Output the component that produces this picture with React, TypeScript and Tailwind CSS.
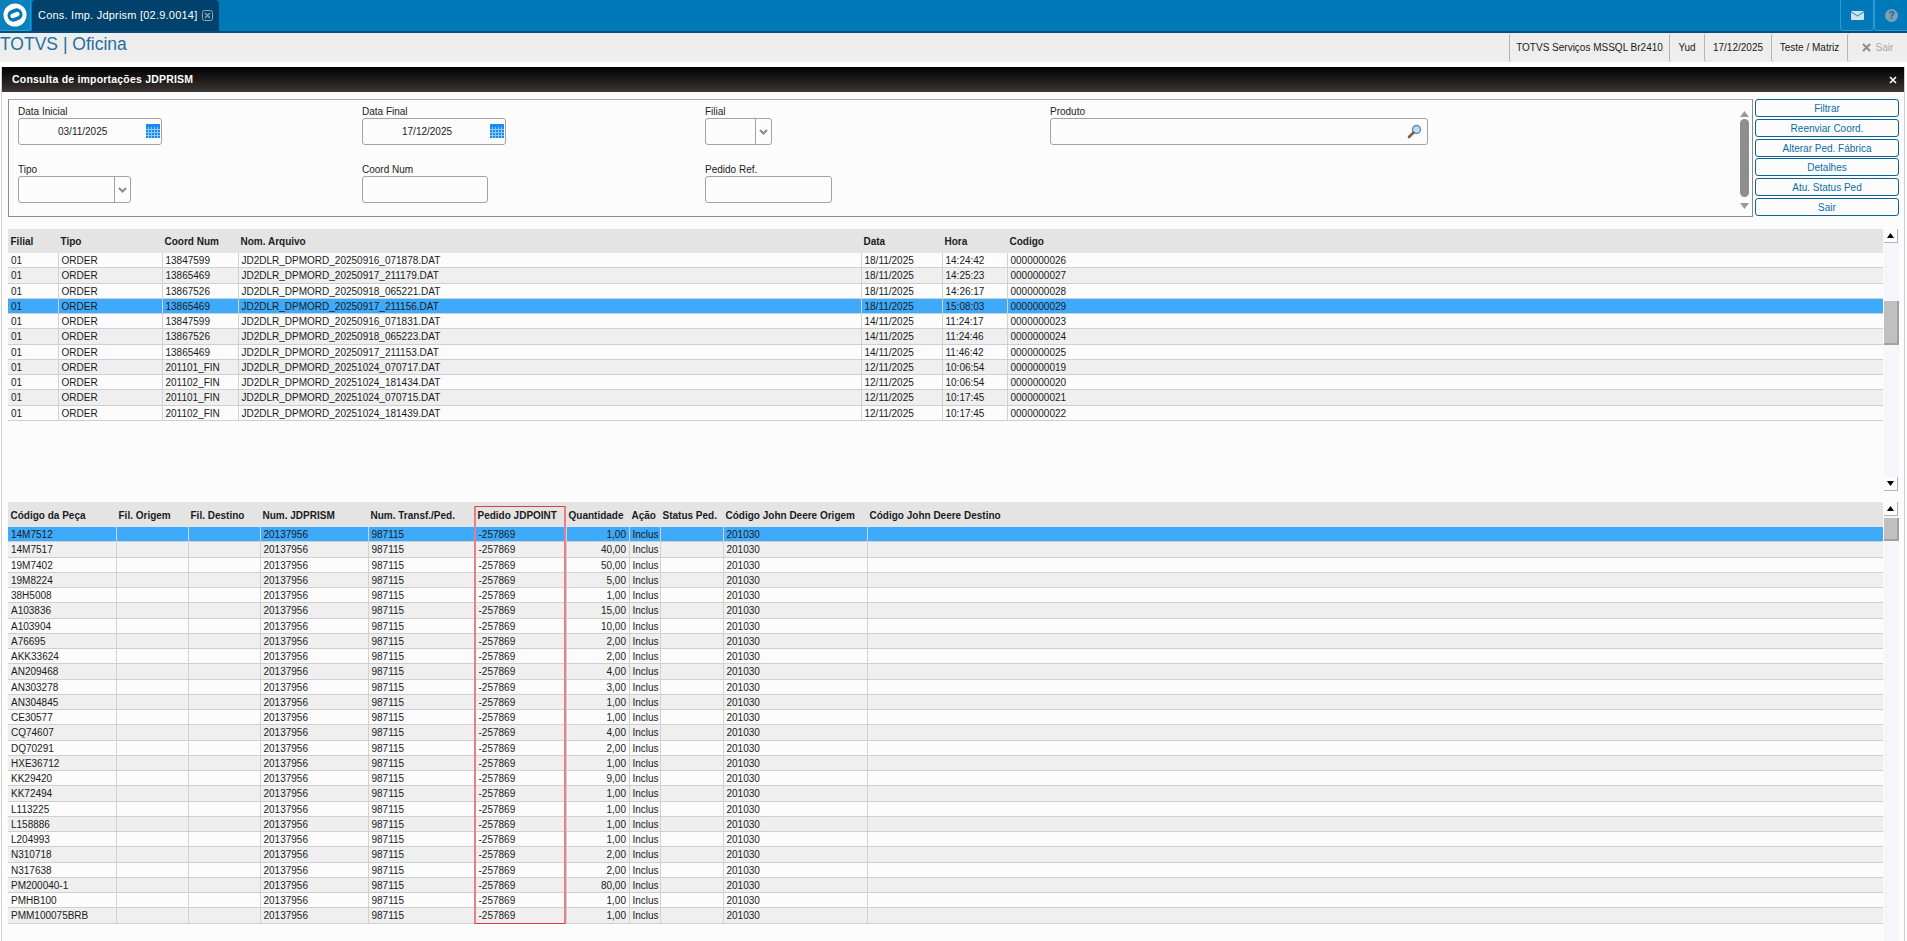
import React from "react";

const FONT = "font-['Liberation_Sans',Arial,sans-serif]";

const t1Cols = [50, 104, 76, 623, 81, 65, 876];
const t1Head = ["Filial", "Tipo", "Coord Num", "Nom. Arquivo", "Data", "Hora", "Codigo"];
const t1Rows: string[][] = [
  ["01", "ORDER", "13847599", "JD2DLR_DPMORD_20250916_071878.DAT", "18/11/2025", "14:24:42", "0000000026"],
  ["01", "ORDER", "13865469", "JD2DLR_DPMORD_20250917_211179.DAT", "18/11/2025", "14:25:23", "0000000027"],
  ["01", "ORDER", "13867526", "JD2DLR_DPMORD_20250918_065221.DAT", "18/11/2025", "14:26:17", "0000000028"],
  ["01", "ORDER", "13865469", "JD2DLR_DPMORD_20250917_211156.DAT", "18/11/2025", "15:08:03", "0000000029"],
  ["01", "ORDER", "13847599", "JD2DLR_DPMORD_20250916_071831.DAT", "14/11/2025", "11:24:17", "0000000023"],
  ["01", "ORDER", "13867526", "JD2DLR_DPMORD_20250918_065223.DAT", "14/11/2025", "11:24:46", "0000000024"],
  ["01", "ORDER", "13865469", "JD2DLR_DPMORD_20250917_211153.DAT", "14/11/2025", "11:46:42", "0000000025"],
  ["01", "ORDER", "201101_FIN", "JD2DLR_DPMORD_20251024_070717.DAT", "12/11/2025", "10:06:54", "0000000019"],
  ["01", "ORDER", "201102_FIN", "JD2DLR_DPMORD_20251024_181434.DAT", "12/11/2025", "10:06:54", "0000000020"],
  ["01", "ORDER", "201101_FIN", "JD2DLR_DPMORD_20251024_070715.DAT", "12/11/2025", "10:17:45", "0000000021"],
  ["01", "ORDER", "201102_FIN", "JD2DLR_DPMORD_20251024_181439.DAT", "12/11/2025", "10:17:45", "0000000022"],
];

const t2Cols = [108, 72, 72, 108, 107, 91, 63, 31, 63, 144, 1017];
const t2Head = ["Código da Peça", "Fil. Origem", "Fil. Destino", "Num. JDPRISM", "Num. Transf./Ped.", "Pedido JDPOINT", "Quantidade", "Ação", "Status Ped.", "Código John Deere Origem", "Código John Deere Destino"];
const parts: [string, string][] = [
  ["14M7512", "1,00"], ["14M7517", "40,00"], ["19M7402", "50,00"], ["19M8224", "5,00"], ["38H5008", "1,00"],
  ["A103836", "15,00"], ["A103904", "10,00"], ["A76695", "2,00"], ["AKK33624", "2,00"], ["AN209468", "4,00"],
  ["AN303278", "3,00"], ["AN304845", "1,00"], ["CE30577", "1,00"], ["CQ74607", "4,00"], ["DQ70291", "2,00"],
  ["HXE36712", "1,00"], ["KK29420", "9,00"], ["KK72494", "1,00"], ["L113225", "1,00"], ["L158886", "1,00"],
  ["L204993", "1,00"], ["N310718", "2,00"], ["N317638", "2,00"], ["PM200040-1", "80,00"], ["PMHB100", "1,00"],
  ["PMM100075BRB", "1,00"],
];

function Row({ cols, cells, index, selected, rightAlign = [] }: { cols: number[]; cells: string[]; index: number; selected: boolean; rightAlign?: number[] }) {
  const bg = selected ? "bg-[#3eaafb]" : index % 2 === 1 ? "bg-[#efefef]" : "bg-[#fcfcfc]";
  return (
    <div className={`flex h-[15.25px] border-b border-[#cfcfcf] ${bg}`}>
      {cells.map((c, i) => (
        <div
          key={i}
          style={{ width: cols[i] }}
          className={`shrink-0 overflow-hidden whitespace-nowrap pr-[3px] leading-[15px] ${i > 0 ? "border-l border-[#d2d2d2] pl-[2.5px]" : "pl-[3px]"} ${rightAlign.includes(i) ? "text-right" : ""}`}
        >
          {c}
        </div>
      ))}
    </div>
  );
}

function Head({ cols, labels, height }: { cols: number[]; labels: string[]; height: string }) {
  return (
    <div className={`flex items-center bg-[#e4e4e4] pt-[1px] font-bold text-[#1c1c1c] ${height}`}>
      {labels.map((l, i) => (
        <div key={i} style={{ width: cols[i] }} className="shrink-0 overflow-hidden whitespace-nowrap pl-[2.5px]">
          {l}
        </div>
      ))}
    </div>
  );
}

function Arrow({ up }: { up?: boolean }) {
  return (
    <div className="flex h-[14px] w-[14px] shrink-0 items-center justify-center border-r border-b border-[#b5b5b5] bg-[#fcfcfc]">
      <svg width="7" height="5" viewBox="0 0 7 5">
        <polygon points={up ? "3.5,0 7,5 0,5" : "0,0 7,0 3.5,5"} fill="#000" />
      </svg>
    </div>
  );
}

function Scroll({ height, thumbTop, thumbH, noDown }: { height: string; thumbTop: string; thumbH: string; noDown?: boolean }) {
  return (
    <div className={`ml-[1px] flex w-[15px] shrink-0 flex-col justify-between bg-[#f6f6fa] ${height}`}>
      <Arrow up />
      <div className="flex-1">
        <div className={`w-[15px] border-r-2 border-b-2 border-[#a0a0a0] bg-[#c0c0c0] ${thumbTop} ${thumbH}`} />
      </div>
      {noDown ? null : <Arrow />}
    </div>
  );
}

function Field({ label, width, children }: { label: string; width: string; children?: React.ReactNode }) {
  return (
    <div className="flex flex-col">
      <div className="h-[13px] leading-[13px] text-[#222]">{label}</div>
      <div className={`relative flex h-[27px] items-center rounded-[3px] border border-[#a3a3a3] bg-[#fcfcfc] ${width}`}>{children}</div>
    </div>
  );
}

function Calendar() {
  return (
    <svg width="14" height="14" viewBox="0 0 14 14" className="absolute right-[1px] top-[5px]">
      <rect width="14" height="14" fill="#1a8cf5" />
      {[5.5, 8.5, 11.5].map((v) => (
        <line key={`h${v}`} x1="0" x2="14" y1={v} y2={v} stroke="#8cc8fa" strokeWidth="1" />
      ))}
      {[2.5, 5.5, 8.5, 11.5].map((v) => (
        <line key={`v${v}`} y1="3" y2="14" x1={v} x2={v} stroke="#8cc8fa" strokeWidth="1" />
      ))}
    </svg>
  );
}

function Chevron() {
  return (
    <div className="absolute inset-y-0 right-0 flex w-[16px] items-center justify-center border-l border-[#a3a3a3]">
      <svg width="9" height="6" viewBox="0 0 9 6">
        <path d="M1 1 L4.5 4.5 L8 1" fill="none" stroke="#8a8a8a" strokeWidth="2" />
      </svg>
    </div>
  );
}

function Btn({ label }: { label: string }) {
  return (
    <div className="flex h-[18px] items-center justify-center rounded-[3px] border border-[#0a6496] bg-[#fcfcfc] pt-[1px] text-[#0a6ca8]">
      {label}
    </div>
  );
}

function TopTab({ children, className = "" }: { children: React.ReactNode; className?: string }) {
  return (
    <div className={`flex h-full items-center justify-center whitespace-nowrap rounded-l-[3px] border-l border-[#b4b4b4] ${className}`}>{children}</div>
  );
}

export default function App() {
  return (
    <div className={`${FONT} h-[941px] w-[1907px] overflow-hidden bg-white text-[10px] text-[#1a1a1a]`}>
      {/* top bar */}
      <div className="flex h-[33px] border-b-2 border-[#00507f] bg-[#0079b8]">
        <div className="flex h-[31px] w-[31px] items-center justify-center rounded-br-[4px] border-r border-b border-[#2b9bd8] bg-[#0a80bd]">
          <svg width="24" height="24" viewBox="0 0 24 24">
            <circle cx="12" cy="12" r="11.5" fill="#fff" />
            <rect x="4.5" y="6" width="15" height="12" rx="5.5" fill="#0079b8" transform="rotate(-22 12 12)" />
            <rect x="7.2" y="9.7" width="9.6" height="4.6" rx="2.3" fill="#fff" transform="rotate(-22 12 12)" />
          </svg>
        </div>
        <div className="ml-[1px] flex h-[31px] w-[187px] items-center rounded-t-[4px] bg-[#00426c] pl-[6px] text-[11px] tracking-[0.22px] text-white">
          <span className="whitespace-nowrap">Cons. Imp. Jdprism [02.9.0014]</span>
          <svg width="11" height="11" viewBox="0 0 11 11" className="ml-[5px] shrink-0">
            <rect x="0.5" y="0.5" width="10" height="10" rx="2" fill="none" stroke="#8fa9ba" />
            <path d="M3 3 L8 8 M8 3 L3 8" stroke="#8fa9ba" strokeWidth="1.3" />
          </svg>
        </div>
        <div className="flex-1" />
        <div className="flex h-[31px] w-[34px] items-center justify-center rounded-b-[4px] border-x border-b border-[#2b9bd8]">
          <svg width="13" height="9" viewBox="0 0 13 9">
            <rect width="13" height="9" rx="1" fill="#cfe3ef" />
            <path d="M0 0.8 L6.5 5 L13 0.8" fill="none" stroke="#0079b8" strokeWidth="0.9" />
          </svg>
        </div>
        <div className="flex h-[31px] w-[33px] items-center justify-center rounded-bl-[4px] border-l border-b border-[#2b9bd8]">
          <svg width="13" height="13" viewBox="0 0 13 13">
            <circle cx="6.5" cy="6.5" r="6.5" fill="#7f9fb3" />
            <text x="6.5" y="10.2" textAnchor="middle" fontSize="10" fontWeight="700" fill="#0a6a9e">?</text>
          </svg>
        </div>
      </div>

      {/* sub header */}
      <div className="flex h-[29px] items-center bg-[#eeeeee]">
        <div className="flex-1 pb-[8px] text-[17.5px] leading-[20px] text-[#1f6f9e]">TOTVS | Oficina</div>
        <div className="flex h-full text-[#1a1a1a]">
          <TopTab className="w-[160px]">TOTVS Serviços MSSQL Br2410</TopTab>
          <TopTab className="w-[35px]">Yud</TopTab>
          <TopTab className="w-[67px]">17/12/2025</TopTab>
          <TopTab className="w-[76px]">Teste / Matriz</TopTab>
          <TopTab className="w-[60px] gap-[5px] text-[#a8a8a8]">
            <svg width="9" height="9" viewBox="0 0 9 9">
              <path d="M1 1 L8 8 M8 1 L1 8" stroke="#8c8c8c" strokeWidth="2" />
            </svg>
            Sair
          </TopTab>
        </div>
      </div>

      <div className="h-[5px]" />

      {/* panel */}
      <div className="mx-[1px] mr-[2px] flex h-[874px] flex-col border-x border-[#d0d0d0] bg-[#fcfcfc]">
        <div className="flex h-[25px] shrink-0 items-center justify-between bg-gradient-to-b from-[#040404] to-[#3c3734] pl-[10px] pr-[7px] text-[10.5px] font-bold tracking-[0.2px] text-white">
          <span>Consulta de importações JDPRISM</span>
          <svg width="8" height="8" viewBox="0 0 8 8">
            <path d="M1 1 L7 7 M7 1 L1 7" stroke="#fff" strokeWidth="1.6" />
          </svg>
        </div>

        {/* filter */}
        <div className="mt-[7px] flex pl-[6px]">
          <div className="flex h-[118px] w-[1745px] border border-[#8a8a8a] border-t-[#a8a8a8] bg-[#fcfcfc] pl-[9px] pt-[5px]">
            <div className="grid flex-1 grid-cols-[344px_343px_345px_1fr] grid-rows-[40px_40px] gap-y-[18px]">
              <Field label="Data Inicial" width="w-[144px]">
                <span className="ml-[39px]">03/11/2025</span>
                <Calendar />
              </Field>
              <Field label="Data Final" width="w-[144px]">
                <span className="ml-[39px]">17/12/2025</span>
                <Calendar />
              </Field>
              <Field label="Filial" width="w-[67px]">
                <Chevron />
              </Field>
              <Field label="Produto" width="w-[378px]">
                <svg width="15" height="15" viewBox="0 0 15 15" className="absolute right-[5px] top-[5px]">
                  <circle cx="9.5" cy="5.5" r="4" fill="#bcdcf5" stroke="#5b8fb8" strokeWidth="1.4" />
                  <path d="M6.5 8.5 L2 13" stroke="#8a5a3c" strokeWidth="2.6" strokeLinecap="round" />
                </svg>
              </Field>
              <Field label="Tipo" width="w-[113px]">
                <Chevron />
              </Field>
              <Field label="Coord Num" width="w-[126px]" />
              <Field label="Pedido Ref." width="w-[127px]" />
            </div>
            <div className="mr-[3px] flex w-[10px] shrink-0 flex-col items-center pt-[6px]">
              <svg width="9" height="6" viewBox="0 0 9 6"><polygon points="4.5,0 9,6 0,6" fill="#999" /></svg>
              <div className="mt-[2px] h-[78px] w-[9px] rounded-[5px] bg-[#8e8e8e]" />
              <svg width="9" height="6" viewBox="0 0 9 6" className="mt-[6px]"><polygon points="0,0 9,0 4.5,6" fill="#999" /></svg>
            </div>
          </div>
          <div className="ml-[2px] flex w-[144px] flex-col gap-[1.8px]">
            {["Filtrar", "Reenviar Coord.", "Alterar Ped. Fábrica", "Detalhes", "Atu. Status Ped", "Sair"].map((b) => (
              <Btn key={b} label={b} />
            ))}
          </div>
        </div>

        {/* first grid */}
        <div className="mt-[12px] flex pl-[6px]">
          <div className="w-[1875px]">
            <Head cols={t1Cols} labels={t1Head} height="h-[24px]" />
            {t1Rows.map((r, i) => (
              <Row key={i} cols={t1Cols} cells={r} index={i} selected={i === 3} />
            ))}
          </div>
          <Scroll height="h-[262px]" thumbTop="mt-[58px]" thumbH="h-[44px]" />
        </div>

        {/* second grid */}
        <div className="relative mt-[11px] flex pl-[6px]">
          <div className="w-[1875px]">
            <Head cols={t2Cols} labels={t2Head} height="h-[25px]" />
            {parts.map(([code, qty], i) => (
              <Row
                key={code}
                cols={t2Cols}
                index={i}
                selected={i === 0}
                rightAlign={[6]}
                cells={[code, "", "", "20137956", "987115", "-257869", qty, "Inclus", "", "201030", ""]}
              />
            ))}
          </div>
          <Scroll height="h-[440px]" thumbTop="mt-[2px]" thumbH="h-[23px]" noDown />
          <div className="pointer-events-none absolute left-[472px] top-[4px] h-[418px] w-[92px] border-x-2 border-x-[#e77f86] border-y border-y-[#e03a42]" />
        </div>
      </div>
    </div>
  );
}
